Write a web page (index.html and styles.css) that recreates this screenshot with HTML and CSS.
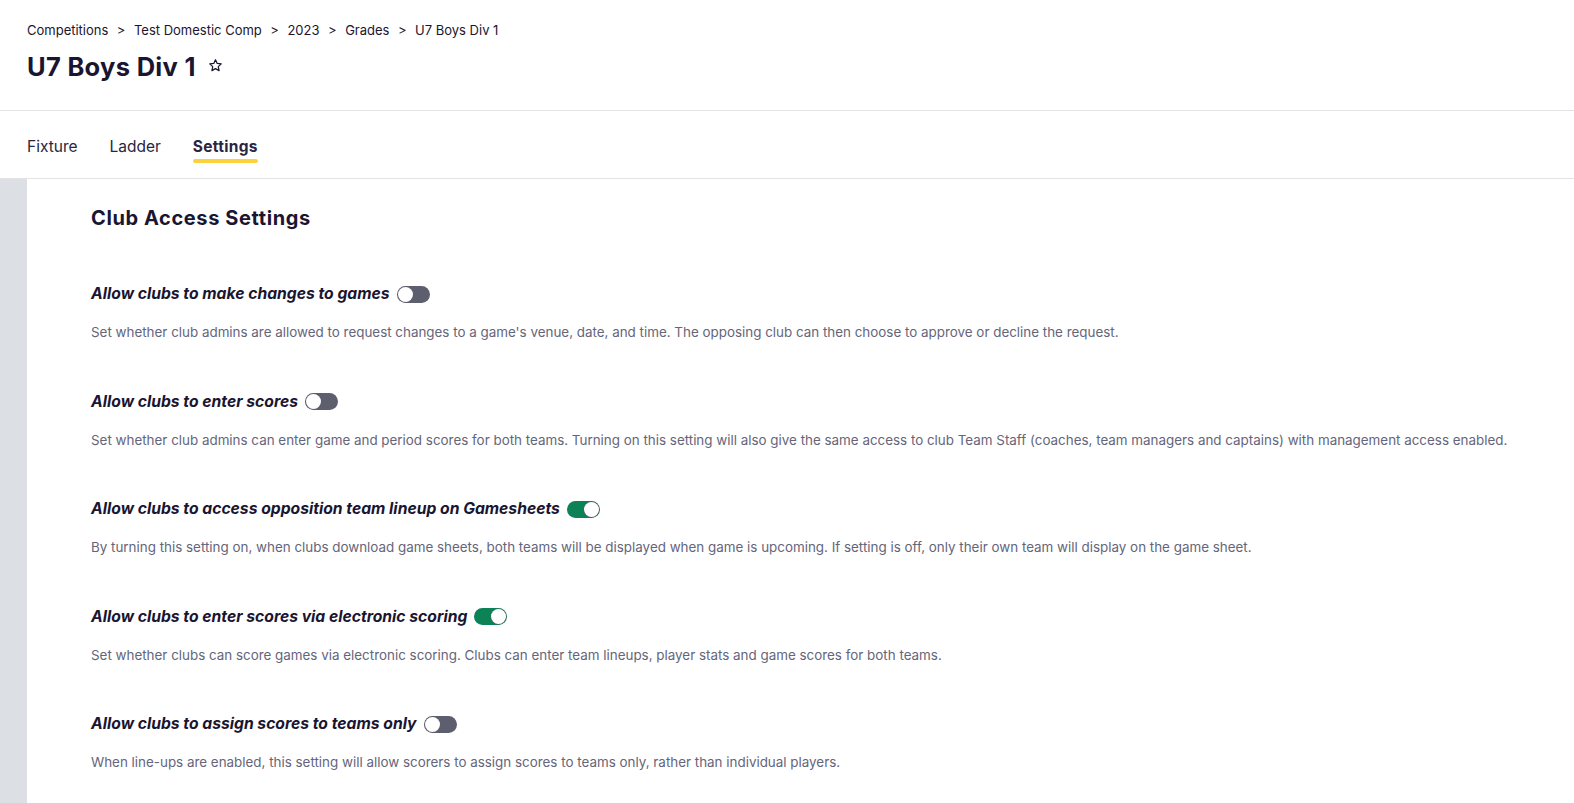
FILE: index.html
```html
<!DOCTYPE html>
<html lang="en">
<head>
<meta charset="utf-8">
<title>U7 Boys Div 1 - Settings</title>
<link rel="stylesheet" href="styles.css">
</head>
<body>
<header class="page-header">
  <nav class="breadcrumb">
    <a href="#">Competitions</a><span class="sep">&gt;</span>
    <a href="#">Test Domestic Comp</a><span class="sep">&gt;</span>
    <a href="#">2023</a><span class="sep">&gt;</span>
    <a href="#">Grades</a><span class="sep">&gt;</span>
    <span>U7 Boys Div 1</span>
  </nav>
  <div class="title-row">
    <h1 class="title">U7 Boys Div 1</h1>
    <svg class="star" viewBox="0 0 24 24" width="15" height="15" aria-hidden="true"><path d="M12 2.8l2.75 5.9 6.45.75-4.78 4.4 1.28 6.37L12 17l-5.7 3.22 1.28-6.37-4.78-4.4 6.45-.75z" fill="none" stroke="#1a1530" stroke-width="2" stroke-linejoin="round"/></svg>
  </div>
</header>
<nav class="tabs">
  <a class="tab" href="#">Fixture</a>
  <a class="tab" href="#">Ladder</a>
  <a class="tab active" href="#">Settings</a>
</nav>
<main class="layout">
  <aside class="rail"></aside>
  <section class="content">
    <h2 class="section-title">Club Access Settings</h2>

    <div class="setting">
      <div class="setting-head">
        <h3 class="setting-title">Allow clubs to make changes to games</h3>
        <span class="toggle"></span>
      </div>
      <p class="setting-desc">Set whether club admins are allowed to request changes to a game's venue, date, and time. The opposing club can then choose to approve or decline the request.</p>
    </div>

    <div class="setting">
      <div class="setting-head">
        <h3 class="setting-title">Allow clubs to enter scores</h3>
        <span class="toggle"></span>
      </div>
      <p class="setting-desc">Set whether club admins can enter game and period scores for both teams. Turning on this setting will also give the same access to club Team Staff (coaches, team managers and captains) with management access enabled.</p>
    </div>

    <div class="setting">
      <div class="setting-head">
        <h3 class="setting-title">Allow clubs to access opposition team lineup on Gamesheets</h3>
        <span class="toggle on"></span>
      </div>
      <p class="setting-desc">By turning this setting on, when clubs download game sheets, both teams will be displayed when game is upcoming. If setting is off, only their own team will display on the game sheet.</p>
    </div>

    <div class="setting">
      <div class="setting-head">
        <h3 class="setting-title">Allow clubs to enter scores via electronic scoring</h3>
        <span class="toggle on"></span>
      </div>
      <p class="setting-desc">Set whether clubs can score games via electronic scoring. Clubs can enter team lineups, player stats and game scores for both teams.</p>
    </div>

    <div class="setting">
      <div class="setting-head">
        <h3 class="setting-title">Allow clubs to assign scores to teams only</h3>
        <span class="toggle"></span>
      </div>
      <p class="setting-desc">When line-ups are enabled, this setting will allow scorers to assign scores to teams only, rather than individual players.</p>
    </div>
  </section>
</main>
</body>
</html>
```
FILE: styles.css
```css
* { box-sizing: border-box; }

html, body {
  margin: 0;
  height: 100%;
}

body {
  font-family: "Inter", "Liberation Sans", sans-serif;
  color: #1a1530;
  background: #fff;
  display: flex;
  flex-direction: column;
  overflow: hidden;
}

a { color: inherit; text-decoration: none; }

.page-header {
  flex: none;
  padding: 22px 27px 0;
  height: 111px;
  border-bottom: 1px solid #e3e3e6;
}

.breadcrumb {
  font-size: 13px;
  line-height: 17px;
  display: flex;
  align-items: center;
}

.breadcrumb .sep {
  margin: 0 8.5px;
}

.title-row {
  display: flex;
  align-items: center;
  gap: 12px;
  margin-top: 13px;
}

.title {
  margin: 0;
  font-size: 25.5px;
  line-height: 30px;
  font-weight: 700;
  letter-spacing: 0.3px;
}

.star { display: block; margin-top: -4px; }

.tabs {
  flex: none;
  display: flex;
  gap: 32px;
  height: 68px;
  padding: 26px 27px 0;
  border-bottom: 1px solid #e3e3e6;
}

.tab {
  font-size: 15.5px;
  line-height: 20px;
  color: #2a2540;
  height: 26px;
  position: relative;
}

.tab.active {
  font-weight: 700;
  letter-spacing: 0.3px;
}

.tab.active::after {
  content: "";
  position: absolute;
  left: 0;
  right: 0;
  bottom: 0;
  height: 4px;
  border-radius: 2px;
  background: #fbd23c;
}

.layout {
  flex: 1;
  display: flex;
  min-height: 0;
}

.rail {
  width: 27px;
  flex: none;
  background: #dcdfe4;
}

.content {
  flex: 1;
  padding: 26px 0 0 64px;
}

.section-title {
  margin: 0 0 52px;
  font-size: 20px;
  line-height: 26px;
  font-weight: 700;
  letter-spacing: 0.6px;
}

.setting {
  margin-bottom: 48.5px;
}

.setting-head {
  display: flex;
  align-items: center;
  gap: 7px;
  height: 22px;
}

.setting-title {
  margin: 0;
  font-size: 15.7px;
  line-height: 22px;
  font-weight: 700;
  font-style: italic;
}

.toggle {
  width: 33px;
  height: 17px;
  border-radius: 9px;
  background: #5d5e6e;
  position: relative;
  flex: none;
}

.toggle::after {
  content: "";
  position: absolute;
  top: 1px;
  left: 1px;
  width: 15px;
  height: 15px;
  border-radius: 50%;
  background: #fff;
  box-shadow: 0 0 0 0.5px #5d5e6e;
}

.toggle.on {
  background: #0b8357;
}

.toggle.on::after {
  left: 17px;
}

.setting-desc {
  margin: 17px 0 0;
  font-size: 13.4px;
  line-height: 20px;
  color: #65657a;
}
```
